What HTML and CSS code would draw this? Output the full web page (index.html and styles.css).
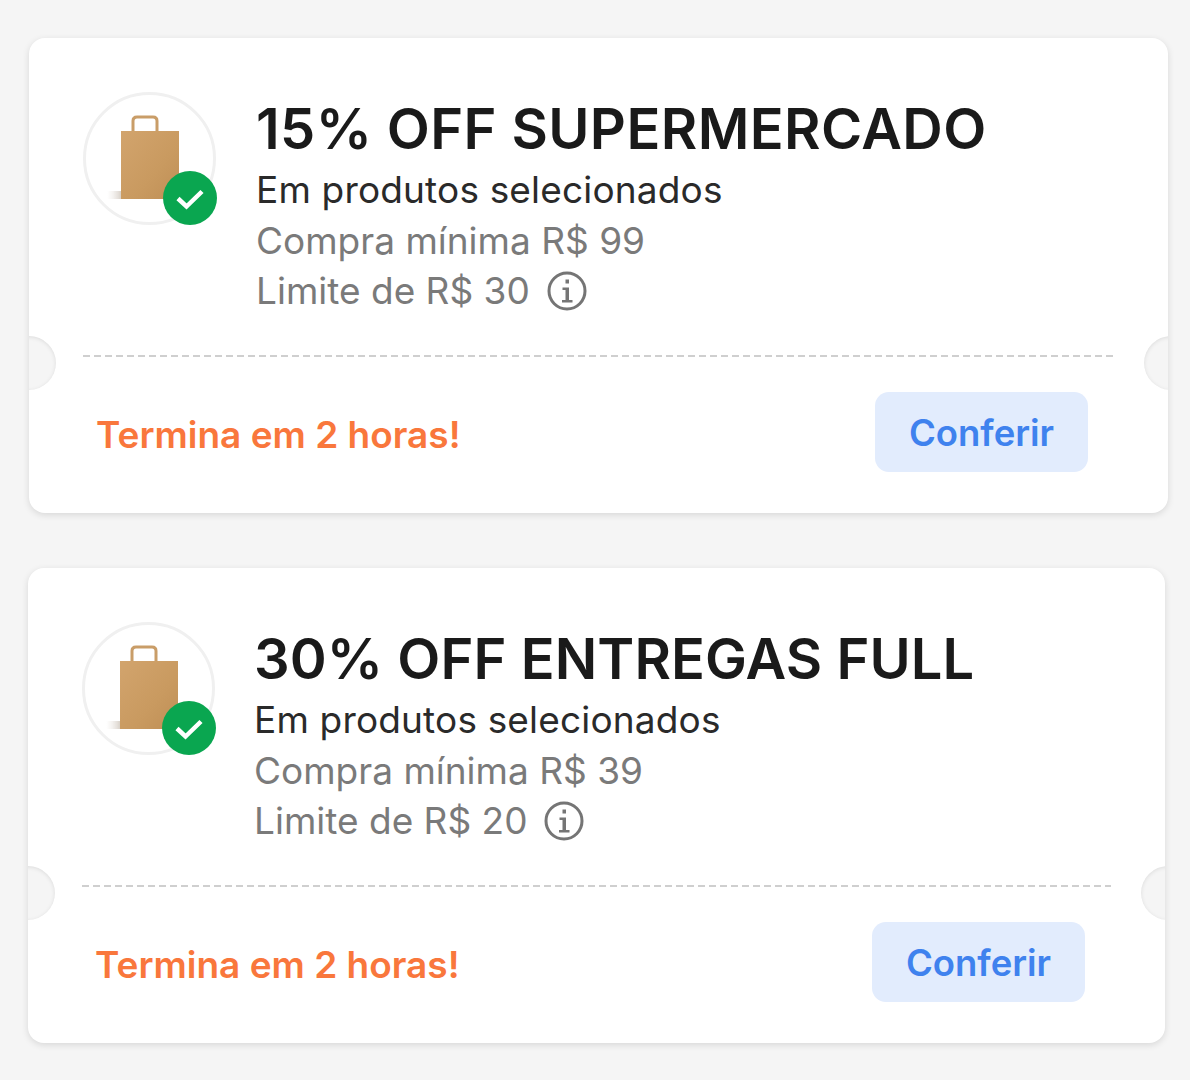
FILE: index.html
```html
<!DOCTYPE html>
<html lang="pt-BR">
<head>
<meta charset="utf-8">
<title>Cupons</title>
<link rel="stylesheet" href="styles.css">
</head>
<body>
<main class="list">
  <article class="coupon coupon-a">
    <span class="notch notch-left"></span>
    <span class="notch notch-right"></span>
    <section class="top">
      <div class="thumb">
        <svg class="bag" viewBox="0 0 76 92" width="76" height="92" aria-hidden="true">
          <defs>
            <linearGradient id="b1" x1="0" y1="0" x2="1" y2="1"><stop offset="0" stop-color="#d2a46d"/><stop offset=".6" stop-color="#c99a60"/><stop offset="1" stop-color="#bf8f56"/></linearGradient>
            <linearGradient id="s1" x1="0" y1="0" x2="1" y2="0"><stop offset="0" stop-color="#eeeae6" stop-opacity="0"/><stop offset="1" stop-color="#d9d2ca"/></linearGradient>
          </defs>
          <rect x="0" y="77" width="14" height="8" fill="url(#s1)"/>
          <path d="M26 18V7q0-4 4-4h16q4 0 4 4v11" fill="none" stroke="#c99d68" stroke-width="3"/>
          <rect x="14" y="17" width="58" height="68" fill="url(#b1)"/>
        </svg>
        <span class="check">
          <svg viewBox="0 0 54 54" width="54" height="54" aria-hidden="true"><path d="M15 27.500l8.500 8 15.500-15" fill="none" stroke="#fff" stroke-width="4.500"/></svg>
        </span>
      </div>
      <div class="info">
        <h2 class="title">15% OFF SUPERMERCADO</h2>
        <p class="sub">Em produtos selecionados</p>
        <p class="meta">Compra mínima R$ 99</p>
        <p class="meta"><span>Limite de R$ 30</span>
          <svg class="i-icon" viewBox="0 0 40 40" width="40" height="40" aria-hidden="true"><circle cx="20" cy="20" r="18" fill="none" stroke="#757575" stroke-width="3"/><path d="M18.500 8.500h3.500v4h-3.500zM15.500 16.500h6.500v12.500h3.500v2.500h-10.500V29h3.500v-10h-3z" fill="#757575"/></svg>
        </p>
      </div>
    </section>
    <div class="divider"></div>
    <footer class="bottom">
      <span class="ends">Termina em 2 horas!</span>
      <button class="cta">Conferir</button>
    </footer>
  </article>

  <article class="coupon coupon-b">
    <span class="notch notch-left"></span>
    <span class="notch notch-right"></span>
    <section class="top">
      <div class="thumb">
        <svg class="bag" viewBox="0 0 76 92" width="76" height="92" aria-hidden="true">
          <defs>
            <linearGradient id="b2" x1="0" y1="0" x2="1" y2="1"><stop offset="0" stop-color="#d2a46d"/><stop offset=".6" stop-color="#c99a60"/><stop offset="1" stop-color="#bf8f56"/></linearGradient>
            <linearGradient id="s2" x1="0" y1="0" x2="1" y2="0"><stop offset="0" stop-color="#eeeae6" stop-opacity="0"/><stop offset="1" stop-color="#d9d2ca"/></linearGradient>
          </defs>
          <rect x="0" y="77" width="14" height="8" fill="url(#s2)"/>
          <path d="M26 18V7q0-4 4-4h16q4 0 4 4v11" fill="none" stroke="#c99d68" stroke-width="3"/>
          <rect x="14" y="17" width="58" height="68" fill="url(#b2)"/>
        </svg>
        <span class="check">
          <svg viewBox="0 0 54 54" width="54" height="54" aria-hidden="true"><path d="M15 27.500l8.500 8 15.500-15" fill="none" stroke="#fff" stroke-width="4.500"/></svg>
        </span>
      </div>
      <div class="info">
        <h2 class="title">30% OFF ENTREGAS FULL</h2>
        <p class="sub">Em produtos selecionados</p>
        <p class="meta">Compra mínima R$ 39</p>
        <p class="meta"><span>Limite de R$ 20</span>
          <svg class="i-icon" viewBox="0 0 40 40" width="40" height="40" aria-hidden="true"><circle cx="20" cy="20" r="18" fill="none" stroke="#757575" stroke-width="3"/><path d="M18.500 8.500h3.500v4h-3.500zM15.500 16.500h6.500v12.500h3.500v2.500h-10.500V29h3.500v-10h-3z" fill="#757575"/></svg>
        </p>
      </div>
    </section>
    <div class="divider"></div>
    <footer class="bottom">
      <span class="ends">Termina em 2 horas!</span>
      <button class="cta">Conferir</button>
    </footer>
  </article>
</main>
</body>
</html>
```
FILE: styles.css
```css
* { box-sizing: border-box; }
html, body { margin: 0; padding: 0; }
body {
  width: 1190px;
  height: 1080px;
  overflow: hidden;
  background: #f5f5f5;
  font-family: "Inter", "Liberation Sans", sans-serif;
}
.list {
  display: flex;
  flex-direction: column;
  gap: 55px;
  padding-top: 38px;
}
.coupon {
  position: relative;
  height: 475px;
  background: #fff;
  border-radius: 16px;
  box-shadow: 0 2px 7px rgba(0, 0, 0, 0.12);
  overflow: hidden;
  display: flex;
  flex-direction: column;
}
.coupon-a { width: 1139px; margin-left: 29px; }
.coupon-b { width: 1137px; margin-left: 28px; }
.notch {
  position: absolute;
  top: 298px;
  width: 54px;
  height: 54px;
  border-radius: 50%;
  background: #f5f5f5;
  box-shadow: inset 0 1px 4px rgba(0, 0, 0, 0.1);
}
.notch-left { left: -27px; }
.notch-right { right: -30px; }
.top {
  display: flex;
  height: 317px;
  padding: 54px 0 0 54px;
}
.thumb {
  position: relative;
  flex: none;
  width: 133px;
  height: 133px;
  border: 3px solid #f0f0f0;
  border-radius: 50%;
  display: flex;
  justify-content: center;
  margin-right: 40px;
}
.coupon-b .thumb { margin-right: 39px; }
.bag {
  margin: 19px 9px 0 0;
  filter: blur(0.5px);
}
.check {
  position: absolute;
  right: -4px;
  bottom: -3px;
  width: 54px;
  height: 54px;
  border-radius: 50%;
  background: #0aa650;
  display: flex;
}
.info { display: flex; flex-direction: column; margin-top: 2px; }
.title {
  margin: 0;
  height: 70px;
  font-size: 56px;
  line-height: 70px;
  font-weight: 600;
  letter-spacing: 0.4px;
  color: #1a1a1a;
  white-space: nowrap;
}
.coupon-b .title { letter-spacing: 0.1px; }
.sub, .meta {
  margin: 0;
  display: flex;
  align-items: center;
  height: 50px;
  font-size: 37px;
  line-height: 50px;
}
.sub { color: #2a2a2a; margin: 1px 0 1px; letter-spacing: 0.17px; }
.meta { color: #7a7a7a; }
.i-icon { margin-left: 17px; }
.divider {
  height: 2px;
  margin: 0 54px;
  background: repeating-linear-gradient(90deg, #cfcfcf 0 7px, transparent 7px 11px);
}
.bottom {
  display: flex;
  justify-content: space-between;
  align-items: center;
  padding: 35px 80px 0 67px;
}
.ends {
  margin-top: 4px;
  font-size: 37px;
  font-weight: 600;
  color: #f9773c;
}
.cta {
  width: 213px;
  height: 80px;
  padding: 2px 0 0;
  border: 0;
  border-radius: 14px;
  background: #e2ecfd;
  color: #3f82ee;
  font-family: inherit;
  font-size: 36.500px;
  font-weight: 600;
}
```
